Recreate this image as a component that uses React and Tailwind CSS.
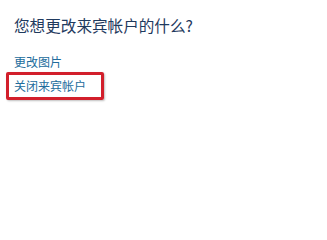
export default function App() {
  return (
    <div
      className="w-[327px] h-[216px] bg-white pt-[13px] pl-[14px]"
      style={{ fontFamily: '"Noto Sans CJK SC", "Noto Sans", sans-serif' }}
    >
      <div className="text-[15.6px] leading-[24px] text-[#1f3a5e]">您想更改来宾帐户的什么?</div>
      <div className="mt-[17px] text-[12px] leading-[16px] text-[#226c9c]">更改图片</div>
      <div className="mt-[2px] -ml-[8px] w-[98px] h-[28px] border-[3px] border-[#d21f2b] rounded-[2px] pl-[5px] pt-[3px] shadow-[1px_1px_2px_rgba(0,0,0,0.25)]">
        <div className="text-[12px] leading-[16px] text-[#226c9c]">关闭来宾帐户</div>
      </div>
    </div>
  );
}
